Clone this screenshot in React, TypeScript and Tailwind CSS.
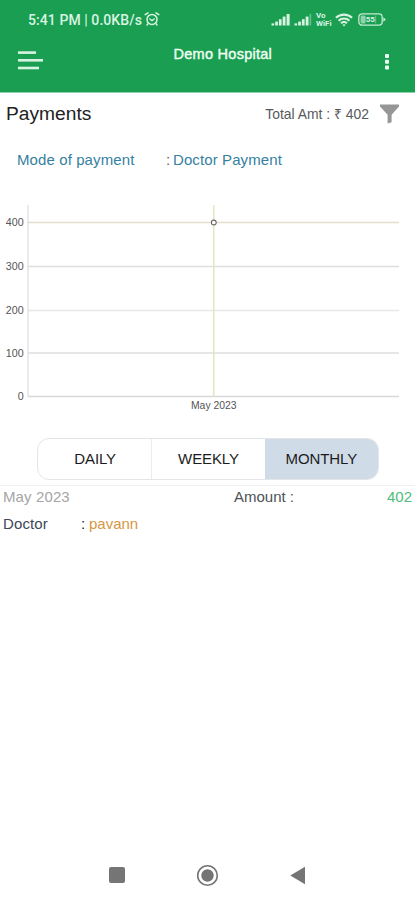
import React from "react";

const sans = "font-['Liberation_Sans',Arial,sans-serif]";

function AlarmIcon() {
  return (
    <svg width="16" height="16" viewBox="0 0 16 16" fill="none" stroke="#d9f3e2" strokeWidth="1.5" strokeLinecap="round">
      <circle cx="8" cy="8.4" r="5" />
      <path d="M1.2 3.6 4 1.8M14.8 3.6 12 1.8M5.8 8 8 9.6l2.2-1.6M4 12.8l-1 1.2M12 12.8l1 1.2" />
    </svg>
  );
}

function SignalIcon({ faded }: { faded?: boolean }) {
  return (
    <svg width="20" height="13" viewBox="0 0 20 13" fill="#d9f3e2">
      <rect x="0.5" y="10.4" width="2.6" height="2.1" />
      <rect x="4.2" y="8.6" width="2.7" height="3.9" />
      <rect x="7.9" y="6.2" width="2.7" height="6.3" />
      <rect x="11.7" y="3.6" width="2.8" height="8.9" />
      <rect x="15.6" y="1" width={faded ? 1.6 : 3} height="11.5" opacity={faded ? 0.4 : 1} />
    </svg>
  );
}

function WifiIcon() {
  return (
    <svg width="18" height="14" viewBox="0 0 18 14" fill="none" stroke="#d9f3e2" strokeWidth="2.1">
      <path d="M0.9 4.8C5.4 0.5 12.6 0.5 17.1 4.8" />
      <path d="M3.6 7.7C6.7 4.8 11.3 4.8 14.4 7.7" />
      <path d="M6 10.3C7.8 8.6 10.2 8.6 12 10.3" />
      <path d="M9 13.4 7.4 11.8Q9 10.5 10.6 11.8Z" fill="#d9f3e2" stroke="none" />
    </svg>
  );
}

function BatteryIcon() {
  return (
    <svg width="28" height="13" viewBox="0 0 28 13" fill="none">
      <rect x="0.8" y="0.8" width="23.4" height="11.4" rx="3.4" stroke="#c4ebd2" strokeWidth="1.3" />
      <rect x="2.6" y="2.6" width="5" height="7.8" rx="1.5" fill="#8fd3a8" />
      <rect x="17" y="2.6" width="1.2" height="7.8" fill="#5fbd84" />
      <path d="M25.4 4.2 27.8 6.5 25.4 8.8Z" fill="#d9f3e2" />
      <text x="12.3" y="9.4" fontSize="8" fontWeight="700" textAnchor="middle" fill="#d9f3e2" fontFamily="Roboto, sans-serif">55</text>
    </svg>
  );
}

function StatusBar() {
  return (
    <div className="flex h-[38px] items-center pl-7 pr-[29px] pt-px text-[#d9f3e2]">
      <span className="w-[116px] whitespace-nowrap font-[Roboto,sans-serif] text-[14px] font-medium leading-5 tracking-[0.07px]">5:41 PM | 0.0KB/s</span>
      <span className="-mt-px"><AlarmIcon /></span>
      <span className="ml-auto"><SignalIcon /></span>
      <span className="ml-[3px]"><SignalIcon faded /></span>
      <span className="ml-0.5 flex w-4 flex-col font-[Roboto,sans-serif] text-[8px] font-bold leading-[8px]">
        <span>Vo</span>
        <span>WiFi</span>
      </span>
      <span className="ml-[3px]"><WifiIcon /></span>
      <span className="ml-[5px]"><BatteryIcon /></span>
    </div>
  );
}

function Header() {
  return (
    <header className="h-[93px] border-b border-[#8fd0a8] bg-[#1a9f52]">
      <StatusBar />
      <div className="flex items-start pl-[18px] pr-[26px]">
        <svg className="mt-[13px]" width="26" height="20" viewBox="0 0 26 20" fill="#d9f3e2">
          <rect x="0" y="0.3" width="18" height="2.6" />
          <rect x="0" y="8" width="25" height="2.6" />
          <rect x="0" y="15.7" width="21" height="2.6" />
        </svg>
        <h1 className="ml-[129.5px] mt-[7px] whitespace-nowrap text-[14.5px] leading-[18px] tracking-[0.27px] text-[#effff4] [-webkit-text-stroke:0.4px_#effff4]">Demo Hospital</h1>
        <svg className="ml-auto mt-4" width="4" height="16" viewBox="0 0 4 16" fill="#effff4">
          <rect width="4" height="4" rx="1" />
          <rect y="5.7" width="4" height="4" rx="1" />
          <rect y="11.4" width="4" height="4" rx="1" />
        </svg>
      </div>
    </header>
  );
}

const gridLines = [
  { label: "400", y: 27.5, color: "#e6dccf" },
  { label: "300", y: 71.5, color: "#dedede" },
  { label: "200", y: 115.5, color: "#e9e6e6" },
  { label: "100", y: 158, color: "#dedede" },
  { label: "0", y: 201.5, color: "#d8d8d8" },
];

function Chart() {
  return (
    <svg className="block" width="415" height="220" viewBox="0 0 415 220" fontFamily="'Liberation Sans', Arial, sans-serif" fontSize="10.7" fill="#555">
      {gridLines.map((line) => (
        <g key={line.label}>
          <path d={`M28 ${line.y}H399`} stroke={line.color} strokeWidth="1.3" />
          <text x="23.7" y={line.y + 3.5} textAnchor="end">{line.label}</text>
        </g>
      ))}
      <path d="M28 10V202" stroke="#dedede" strokeWidth="1.2" />
      <path d="M213.8 10V202" stroke="#e3e3c6" strokeWidth="1.4" />
      <circle cx="213.8" cy="27.5" r="2.4" fill="#fff" stroke="#6b6b66" strokeWidth="1.1" />
      <text x="213.8" y="214" textAnchor="middle" fontSize="10.4">May 2023</text>
    </svg>
  );
}

function PeriodTabs() {
  const cell = "flex items-center justify-center";
  return (
    <div className="ml-[37px] mt-[23px] grid h-[42px] w-[342px] grid-cols-3 overflow-hidden rounded-[12px] border border-[#e3e5e7] text-[15px] tracking-[-0.1px] text-[#1c1c1c]">
      <button className={`${cell} pl-px pt-px`}>DAILY</button>
      <button className={`${cell} border-l border-[#ececec] pt-px`}>WEEKLY</button>
      <button className={`${cell} bg-[#cfdbe6] pt-px`}>MONTHLY</button>
    </div>
  );
}

export default function App() {
  return (
    <div className={`${sans} flex h-[900px] w-[415px] flex-col overflow-hidden bg-white`}>
      <Header />
      <div className="flex h-[41px] items-center pl-1.5 pr-[15px]">
        <h2 className="text-[19.2px] leading-6 text-[#222]">Payments</h2>
        <span className="ml-auto text-[13.9px] leading-5 text-[#57595c]">Total Amt : ₹ 402</span>
        <svg className="ml-[10px]" width="21" height="20" viewBox="0 0 21 20" fill="#969696">
          <path d="M1 0.5H20V2.5L12.6 10.8V18.2L8.6 19.6V10.8L1 2.5Z" />
        </svg>
      </div>
      <div className="flex h-[61px] pl-[17px] pt-4 text-[15px] leading-5 text-[#357f9f]">
        <span className="w-[149px] tracking-[0.1px]">Mode of payment</span>
        <span className="w-[7px] text-[#53656e]">:</span>
        <span className="tracking-[0.1px]">Doctor Payment</span>
      </div>
      <Chart />
      <PeriodTabs />
      <section className="mt-[5px] border-t border-[#f0f0f0] px-[3px] text-[15px] leading-5">
        <div className="flex pt-px">
          <span className="w-[231px] tracking-[0.12px] text-[#a5a5a5]">May 2023</span>
          <span className="text-[#4d5358]">Amount :</span>
          <span className="ml-auto text-[#50bd7a]">402</span>
        </div>
        <div className="flex pt-[7px]">
          <span className="w-[78px] tracking-[0.12px] text-[#3c4856]">Doctor</span>
          <span className="w-2 text-[#222]">:</span>
          <span className="text-[#d6973f]">pavann</span>
        </div>
      </section>
      <nav className="mb-[13px] mt-auto flex h-6 items-center pl-[109px]">
        <svg width="16" height="16" viewBox="0 0 16 16"><rect width="16" height="16" rx="2" fill="#757575" /></svg>
        <svg className="ml-[71px]" width="23" height="23" viewBox="0 0 23 23">
          <circle cx="11.5" cy="11.5" r="9.8" fill="none" stroke="#757575" strokeWidth="1.6" />
          <circle cx="11.5" cy="11.5" r="6.2" fill="#757575" />
        </svg>
        <svg className="ml-[71px]" width="16" height="19" viewBox="0 0 16 19"><path d="M0.3 9.5 15 0.8V18.2Z" fill="#757575" /></svg>
      </nav>
    </div>
  );
}
